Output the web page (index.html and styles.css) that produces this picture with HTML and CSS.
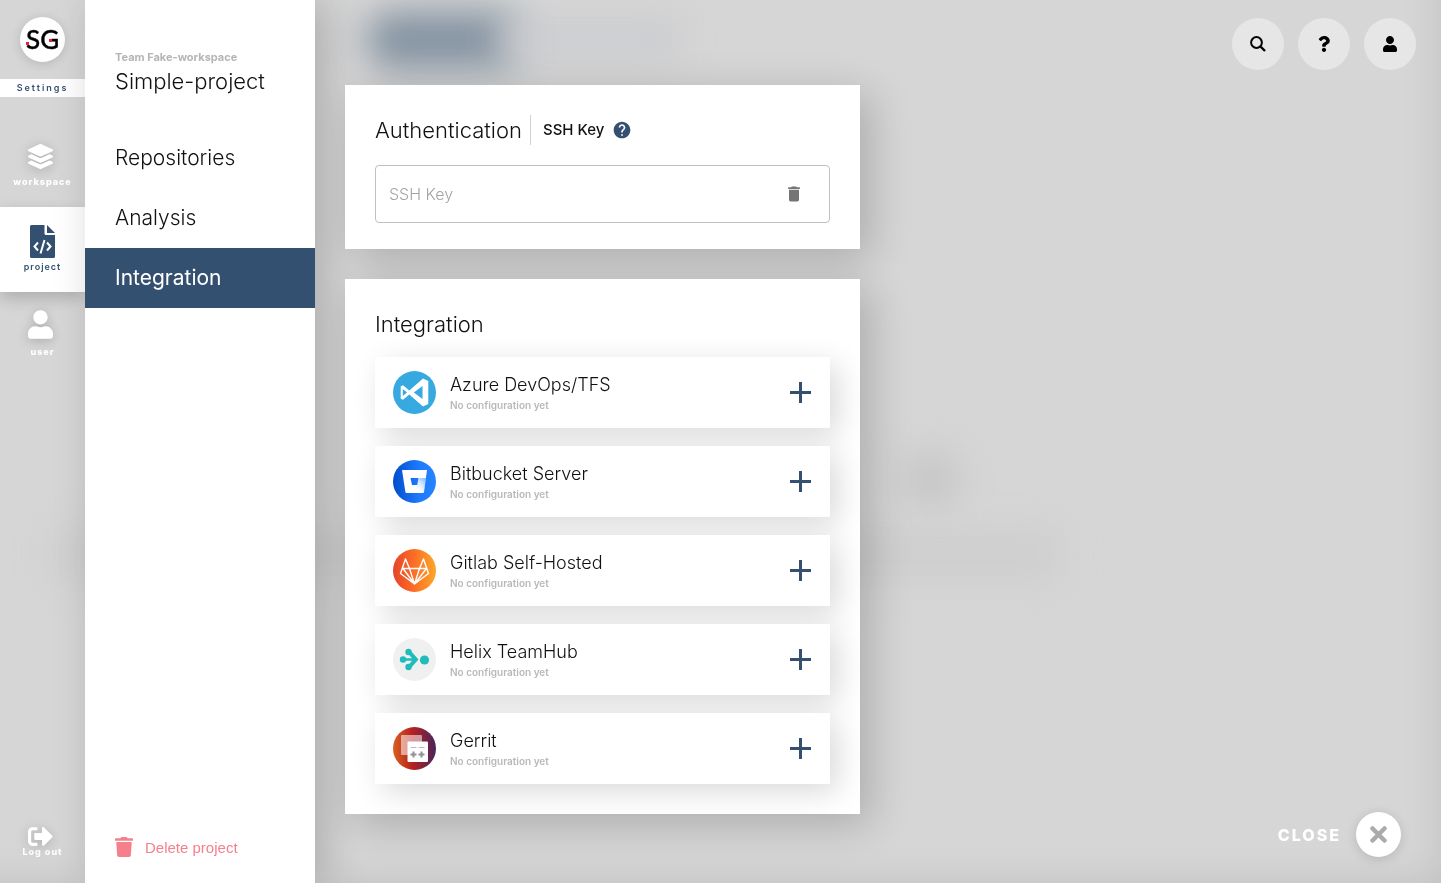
FILE: index.html
```html
<!DOCTYPE html>
<html lang="en">
<head>
  <meta charset="UTF-8">
  <meta name="viewport" content="width=device-width, initial-scale=1.0">
  <title>Project settings - Integration</title>
  <link rel="stylesheet" href="styles.css">
</head>
<body>
  <div class="backdrop" aria-hidden="true">
    <span class="blob blob-button"></span>
    <span class="blob blob-tabs"></span>
    <span class="blob blob-icon"></span>
    <span class="blob blob-text"></span>
  </div>

  <div class="layout">
    <nav class="rail">
      <a href="#" class="logo">
        <svg width="45" height="45" viewBox="0 0 45 45">
          <text x="6" y="32" class="logo-text">SG</text>
          <rect x="6" y="25" width="3" height="3" fill="#f0222f"/>
          <rect x="29" y="22" width="3" height="3" fill="#f0222f"/>
        </svg>
      </a>
      <div class="rail-title">Settings</div>
      <a href="#" class="rail-item">
        <svg width="25" height="25" viewBox="0 0 512 512" fill="currentColor"><path d="M12.41 148.02l232.94 105.67c6.8 3.09 14.49 3.09 21.29 0l232.94-105.67c16.55-7.51 16.55-32.52 0-40.03L266.65 2.31a25.607 25.607 0 0 0-21.29 0L12.41 107.98c-16.55 7.51-16.55 32.53 0 40.04zm487.18 88.28l-58.09-26.33-161.64 73.27c-7.56 3.43-15.59 5.17-23.86 5.17s-16.29-1.740-23.860-5.170L70.510 209.970l-58.100 26.330c-16.550 7.500-16.550 32.500 0 40l232.940 105.590c6.800 3.080 14.490 3.080 21.290 0L499.590 276.300c16.550-7.500 16.550-32.500 0-40zm0 127.800l-57.870-26.230-161.860 73.370c-7.560 3.430-15.590 5.170-23.860 5.170s-16.290-1.740-23.860-5.170L70.290 337.870 12.410 364.100c-16.550 7.500-16.550 32.500 0 40l232.940 105.590c6.800 3.080 14.490 3.080 21.290 0L499.590 404.100c16.550-7.500 16.550-32.500 0-40z"/></svg>
        <span>workspace</span>
      </a>
      <a href="#" class="rail-item active">
        <svg width="25" height="33" viewBox="0 0 25 33">
          <path fill="currentColor" d="M1.500 0H14.500V8.500Q14.500 10 16 10H25V31.500Q25 33 23.500 33H1.500Q0 33 0 31.500V1.500Q0 0 1.500 0ZM17 0L25 8H17Z"/>
          <path fill="none" stroke="#fff" stroke-width="2" d="M8 17.500L4.500 21.500L8 25.500M17 17.500L20.500 21.500L17 25.500M14.500 15L10.500 28.500"/>
        </svg>
        <span>project</span>
      </a>
      <a href="#" class="rail-item">
        <svg width="25" height="29" viewBox="0 0 448 512" fill="currentColor"><path d="M224 256c70.700 0 128-57.300 128-128S294.700 0 224 0 96 57.300 96 128s57.300 128 128 128zm89.600 32h-16.700c-22.200 10.200-46.900 16-72.900 16s-50.600-5.800-72.900-16h-16.700C60.200 288 0 348.200 0 422.400V464c0 26.500 21.500 48 48 48h352c26.500 0 48-21.500 48-48v-41.600c0-74.200-60.200-134.400-134.400-134.400z"/></svg>
        <span>user</span>
      </a>
      <button type="button" class="rail-item logout">
        <svg width="25" height="19" viewBox="0 64 512 384" fill="currentColor"><path d="M497 273L329 441c-15 15-41 4.500-41-17v-96H152c-13.300 0-24-10.700-24-24v-96c0-13.300 10.700-24 24-24h136V88c0-21.400 25.900-32 41-17l168 168c9.300 9.400 9.300 24.600 0 34zM192 436v-40c0-6.600-5.400-12-12-12H96c-17.700 0-32-14.300-32-32V160c0-17.700 14.300-32 32-32h84c6.600 0 12-5.400 12-12V76c0-6.600-5.400-12-12-12H96c-53 0-96 43-96 96v192c0 53 43 96 96 96h84c6.600 0 12-5.400 12-12z"/></svg>
        <span>Log out</span>
      </button>
    </nav>

    <aside class="panel">
      <header class="panel-header">
        <p class="team">Team Fake-workspace</p>
        <h1>Simple-project</h1>
      </header>
      <nav class="menu">
        <a href="#">Repositories</a>
        <a href="#">Analysis</a>
        <a href="#" class="active">Integration</a>
      </nav>
      <button type="button" class="delete">
        <svg width="18" height="20" viewBox="0 0 448 512" preserveAspectRatio="none" fill="currentColor"><path d="M432 32H312l-9.400-18.700A24 24 0 0 0 281.100 0H166.800a23.720 23.720 0 0 0-21.400 13.300L136 32H16A16 16 0 0 0 0 48v32a16 16 0 0 0 16 16h416a16 16 0 0 0 16-16V48a16 16 0 0 0-16-16zM53.200 467a48 48 0 0 0 47.900 45h245.800a48 48 0 0 0 47.900-45L416 128H32z"/></svg>
        Delete project
      </button>
    </aside>

    <main class="main">
      <div class="content">
        <section class="card card-auth">
          <div class="auth-header">
            <h2>Authentication</h2>
            <label for="ssh-key">SSH Key</label>
            <svg width="20" height="20" viewBox="0 0 24 24" fill="#345070"><path d="M12 2C6.480 2 2 6.480 2 12s4.480 10 10 10 10-4.480 10-10S17.520 2 12 2zm1 17h-2v-2h2v2zm2.070-7.750l-.9.920C13.450 12.900 13 13.500 13 15h-2v-.5c0-1.100.450-2.100 1.170-2.830l1.240-1.260c.370-.360.590-.860.590-1.410 0-1.100-.9-2-2-2s-2 .9-2 2H8c0-2.210 1.790-4 4-4s4 1.790 4 4c0 .880-.360 1.680-.930 2.250z"/></svg>
          </div>
          <div class="field">
            <input type="text" id="ssh-key" placeholder="SSH Key">
            <button type="button" aria-label="Delete key">
              <svg width="20" height="20" viewBox="0 0 24 24" fill="currentColor"><path d="M6 19c0 1.100.9 2 2 2h8c1.100 0 2-.9 2-2V7H6v12zM19 4h-3.500l-1-1h-5l-1 1H5v2h14V4z"/></svg>
            </button>
          </div>
        </section>

        <section class="card">
          <h2>Integration</h2>
          <ul class="providers">
            <li class="provider">
              <svg width="43" height="43" viewBox="0 0 43 43">
                <circle cx="21.500" cy="21.500" r="21.500" fill="#37a9e1"/>
                <path fill="#fff" fill-rule="evenodd" d="M30 7.500L35.300 10V33L30 35.500L16.300 23.500L10 28.700L7.700 27.700V15.300L10 14.300L16.300 19.500ZM29.500 15L20.800 21.500L29.500 28ZM9.800 18V25L14 21.500Z"/>
              </svg>
              <div class="provider-text"><h3>Azure DevOps/TFS</h3><p>No configuration yet</p></div>
              <button type="button" class="add" aria-label="Add Azure DevOps/TFS"></button>
            </li>
            <li class="provider">
              <svg width="43" height="43" viewBox="0 0 43 43">
                <defs>
                  <linearGradient id="bb-bg"><stop offset="0" stop-color="#004dcc"/><stop offset="0.600" stop-color="#1d7afc"/><stop offset="1" stop-color="#2684ff"/></linearGradient>
                  <linearGradient id="bb-fade" x1="1" y1="0" x2="0" y2="1"><stop offset="0.100" stop-color="#2684ff" stop-opacity="0.500"/><stop offset="0.800" stop-color="#fff" stop-opacity="0"/></linearGradient>
                </defs>
                <circle cx="21.500" cy="21.500" r="21.500" fill="url(#bb-bg)"/>
                <path fill="#fff" fill-rule="evenodd" d="M9 10H34L31 32Q30.800 33 30 33H13.500Q12.600 33 12.400 32ZM17.500 18L19 25H24.300L25.500 18Z"/>
                <path fill="url(#bb-fade)" d="M25.500 18H33L31 32Q30.800 33 30 33H18L24.300 25Z"/>
              </svg>
              <div class="provider-text"><h3>Bitbucket Server</h3><p>No configuration yet</p></div>
              <button type="button" class="add" aria-label="Add Bitbucket Server"></button>
            </li>
            <li class="provider">
              <svg width="43" height="43" viewBox="0 0 43 43">
                <defs><linearGradient id="gl-bg"><stop offset="0" stop-color="#e5432a"/><stop offset="0.450" stop-color="#fb6a26"/><stop offset="1" stop-color="#fca728"/></linearGradient></defs>
                <circle cx="21.500" cy="21.500" r="21.500" fill="url(#gl-bg)"/>
                <path fill="none" stroke="#fff" stroke-width="1.400" stroke-linejoin="round" d="M12.500 10L7.500 24.500L21.500 35L35.500 24.500L30.500 10L26.500 19.500H16.500ZM16.500 19.500L21.500 35L26.500 19.500M16.500 19.500H10L21.500 35L33.500 19.500H26.500"/>
              </svg>
              <div class="provider-text"><h3>Gitlab Self-Hosted</h3><p>No configuration yet</p></div>
              <button type="button" class="add" aria-label="Add Gitlab Self-Hosted"></button>
            </li>
            <li class="provider">
              <svg width="43" height="43" viewBox="0 0 43 43">
                <circle cx="21.500" cy="21.500" r="21.500" fill="#f0f0f0"/>
                <g fill="#20bcbc">
                  <circle cx="10" cy="21.500" r="3.200"/>
                  <circle cx="15.500" cy="14" r="3.200"/>
                  <circle cx="15.500" cy="29" r="3.200"/>
                  <circle cx="31.500" cy="22" r="4.600"/>
                  <path d="M17.500 12.500L25.500 21.500L17.500 30.500L14.500 28L19 22.700H10V20.300H19L14.500 15Z"/>
                </g>
              </svg>
              <div class="provider-text"><h3>Helix TeamHub</h3><p>No configuration yet</p></div>
              <button type="button" class="add" aria-label="Add Helix TeamHub"></button>
            </li>
            <li class="provider">
              <svg width="43" height="43" viewBox="0 0 43 43">
                <defs><linearGradient id="ge-bg"><stop offset="0" stop-color="#d9611e"/><stop offset="0.450" stop-color="#b5201f"/><stop offset="1" stop-color="#47265c"/></linearGradient></defs>
                <circle cx="21.500" cy="21.500" r="21.500" fill="url(#ge-bg)"/>
                <rect x="8" y="8" width="21" height="20" rx="1" fill="#fff" fill-opacity="0.550"/>
                <rect x="14.500" y="14.500" width="20.500" height="20.500" rx="1" fill="#fff"/>
                <path fill="none" stroke="#bbb" d="M17.500 20.500H23.500M25.500 20.500H31.500"/>
                <path fill="none" stroke="#8f9194" stroke-width="2" d="M17.500 27.500H23.500M20.500 24.500V30.500M25.500 27.500H31.500M28.500 24.500V30.500"/>
              </svg>
              <div class="provider-text"><h3>Gerrit</h3><p>No configuration yet</p></div>
              <button type="button" class="add" aria-label="Add Gerrit"></button>
            </li>
          </ul>
        </section>
      </div>

      <div class="tools">
        <div class="tools-top">
          <button type="button" class="round" aria-label="Search">
            <svg width="16" height="16" viewBox="0 0 16 16" fill="none" stroke="#000"><circle cx="6.500" cy="6.500" r="5.400" stroke-width="2"/><path stroke-width="2.400" d="M10.500 10.500L15 15"/></svg>
          </button>
          <button type="button" class="round" aria-label="Help">
            <svg width="12" height="16" viewBox="0 0 384 512"><path d="M202.021 0C122.202 0 70.503 32.703 29.914 91.026c-7.363 10.580-5.093 25.086 5.178 32.874l43.138 32.709c10.373 7.865 25.132 6.026 33.253-4.148 25.049-31.381 43.630-49.449 82.757-49.449 30.764 0 68.816 19.799 68.816 49.631 0 22.552-18.617 34.134-48.993 51.164-35.423 19.860-82.299 44.576-82.299 106.405V320c0 13.255 10.745 24 24 24h72.471c13.255 0 24-10.745 24-24v-5.773c0-42.860 125.268-44.645 125.268-160.627C377.504 66.256 286.902 0 202.021 0zM192 373.459c-38.196 0-69.271 31.075-69.271 69.271 0 38.195 31.075 69.270 69.271 69.270s69.271-31.075 69.271-69.271-31.075-69.270-69.271-69.270z"/></svg>
          </button>
          <button type="button" class="round" aria-label="Account">
            <svg width="14" height="16" viewBox="0 0 448 512"><path d="M224 256c70.700 0 128-57.300 128-128S294.700 0 224 0 96 57.300 96 128s57.300 128 128 128zm89.600 32h-16.700c-22.200 10.200-46.900 16-72.900 16s-50.600-5.800-72.900-16h-16.700C60.200 288 0 348.200 0 422.400V464c0 26.500 21.500 48 48 48h352c26.500 0 48-21.500 48-48v-41.600c0-74.200-60.200-134.400-134.400-134.400z"/></svg>
          </button>
        </div>
        <button type="button" class="close">
          CLOSE
          <span class="close-circle">
            <svg width="17" height="17" viewBox="0 0 17 17" fill="none" stroke="#a9abad" stroke-width="4.500" stroke-linecap="round"><path d="M2.500 2.500L14.500 14.500M14.500 2.500L2.500 14.500"/></svg>
          </span>
        </button>
      </div>
    </main>
  </div>
</body>
</html>
```
FILE: styles.css
```css
* {
  box-sizing: border-box;
}
body {
  margin: 0;
  font-family: Inter, "Open Sans", sans-serif;
  color: #111;
  background: #d6d6d6;
}
h1, h2, h3, p, ul {
  margin: 0;
  padding: 0;
}
h1, h2 {
  font-size: 22px;
  line-height: 30px;
  font-weight: 300;
}
a {
  text-decoration: none;
  color: inherit;
}
button {
  border: 0;
  padding: 0;
  background: none;
  font-family: inherit;
  cursor: pointer;
}
svg {
  display: block;
  flex: none;
}

/* blurred page behind the settings */
.backdrop {
  position: fixed;
  inset: 0;
  overflow: hidden;
  box-shadow: inset -30px -30px 40px -30px rgba(0, 0, 0, 0.1);
}
.blob {
  position: absolute;
  filter: blur(18px);
}
.blob-button {
  left: 368px;
  top: 12px;
  width: 152px;
  height: 56px;
  border-radius: 20px;
  background: #8291a0;
}
.blob-tabs {
  left: 500px;
  top: 20px;
  width: 180px;
  height: 40px;
  background: #cbccd0;
}
.blob-icon {
  left: 900px;
  top: 450px;
  width: 60px;
  height: 60px;
  border-radius: 50%;
  background: #c6c6c6;
}
.blob-text {
  left: 50px;
  top: 530px;
  width: 1010px;
  height: 50px;
  background: #cecece;
}

.layout {
  position: relative;
  display: grid;
  grid-template-columns: 85px 230px 1fr;
  min-height: 100vh;
}

/* left rail */
.rail {
  display: flex;
  flex-direction: column;
  align-items: stretch;
  padding: 17px 0 20px;
  color: #fff;
}
.logo {
  align-self: center;
  width: 45px;
  height: 45px;
  border-radius: 50%;
  background: #fff;
  box-shadow: 0 2px 12px rgba(0, 0, 0, 0.15);
}
.logo-text {
  font-family: Lato, sans-serif;
  font-size: 26px;
  font-weight: 500;
  stroke: #111;
  stroke-width: 0.4px;
}
.rail-title {
  margin: 17px 0 25px;
  background: #fff;
  color: #345070;
  font-size: 9px;
  line-height: 18px;
  font-weight: 600;
  letter-spacing: 2px;
  text-align: center;
}
.rail-item {
  display: flex;
  flex-direction: column;
  align-items: center;
  justify-content: flex-end;
  gap: 7px;
  height: 85px;
  padding-bottom: 19px;
  color: #fff;
  font-size: 9px;
  line-height: 12px;
  font-weight: 800;
  letter-spacing: 1px;
}
.rail-item svg {
  margin-right: 4px;
  filter: drop-shadow(0 2px 6px rgba(0, 0, 0, 0.2));
}
.rail-item.active {
  gap: 3px;
  background: #fff;
  color: #345070;
  font-weight: 600;
  box-shadow: 0 6px 16px rgba(0, 0, 0, 0.2);
}
.rail-item.active svg {
  margin-right: 0;
  filter: none;
}
.rail-item.logout {
  height: auto;
  gap: 0;
  margin-top: auto;
  padding-bottom: 5px;
}

/* project panel */
.panel {
  display: flex;
  flex-direction: column;
  padding-bottom: 26px;
  background: #fff;
  box-shadow: 10px 0 40px rgba(0, 0, 0, 0.2);
}
.panel-header {
  height: 128px;
  padding: 50px 30px 0;
}
.team {
  margin-bottom: 2px;
  color: #b5b5b5;
  font-size: 11px;
  line-height: 14px;
  font-weight: 700;
}
.menu a {
  display: block;
  padding: 0 30px;
  font-size: 21px;
  line-height: 60px;
  font-weight: 300;
}
.menu a.active {
  background: #345070;
  color: #fff;
  font-weight: 400;
}
.delete {
  display: flex;
  align-items: center;
  gap: 12px;
  margin-top: auto;
  padding: 0 30px;
  color: #f5808c;
  font-family: "Liberation Sans", Arial, sans-serif;
  font-size: 15px;
}

/* cards */
.main {
  display: flex;
  justify-content: space-between;
}
.content {
  flex: 0 1 545px;
  padding: 85px 0 30px 30px;
}
.card {
  padding: 30px;
  background: #fff;
  box-shadow: 10px 10px 40px rgba(0, 0, 0, 0.2);
}
.card-auth {
  margin-bottom: 30px;
  padding-bottom: 26px;
}
.auth-header {
  display: flex;
  align-items: center;
  margin-bottom: 20px;
}
.auth-header label {
  margin: 0 8px;
  padding-left: 12px;
  border-left: 1px solid #d0d0d0;
  font-size: 15px;
  line-height: 30px;
  font-weight: 500;
}
.field {
  display: flex;
  align-items: center;
  height: 58px;
  padding: 0 13px;
  border: 1px solid #c0c0c0;
  border-radius: 4px;
}
.field input {
  flex: 1;
  min-width: 0;
  padding: 0;
  border: 0;
  outline: 0;
  font-family: inherit;
  font-size: 16px;
  font-weight: 300;
}
.field input::placeholder {
  color: #a3a3a3;
}
.field button {
  padding: 12px;
  color: #757575;
}

.providers {
  display: flex;
  flex-direction: column;
  gap: 18px;
  margin-top: 18px;
  list-style: none;
}
.provider {
  display: flex;
  align-items: center;
  gap: 14px;
  height: 71px;
  padding: 0 18px;
  background: #fff;
  box-shadow: 8px 8px 30px rgba(0, 0, 0, 0.15);
}
.provider-text {
  flex: 1;
}
.provider h3 {
  font-size: 18px;
  line-height: 26px;
  font-weight: 300;
}
.provider p {
  color: #b9b9b9;
  font-size: 10px;
  line-height: 15px;
  font-weight: 600;
}
.add {
  width: 23px;
  height: 23px;
  background:
    linear-gradient(#345070, #345070) center / 21px 3px no-repeat,
    linear-gradient(#345070, #345070) center / 3px 21px no-repeat;
}

/* round buttons on the right */
.tools {
  display: flex;
  flex-direction: column;
  justify-content: space-between;
  align-items: flex-end;
  padding: 18px 25px 26px;
}
.tools-top {
  display: flex;
  gap: 14px;
}
.round {
  display: flex;
  align-items: center;
  justify-content: center;
  width: 52px;
  height: 52px;
  border-radius: 50%;
  background: #e6e6e6;
}
.close {
  display: flex;
  align-items: center;
  gap: 15px;
  margin-right: 15px;
  color: #fff;
  font-size: 16px;
  font-weight: 800;
  letter-spacing: 2px;
}
.close-circle {
  display: flex;
  align-items: center;
  justify-content: center;
  width: 45px;
  height: 45px;
  border-radius: 50%;
  background: #fff;
  box-shadow: 0 2px 12px rgba(0, 0, 0, 0.15);
}
```
